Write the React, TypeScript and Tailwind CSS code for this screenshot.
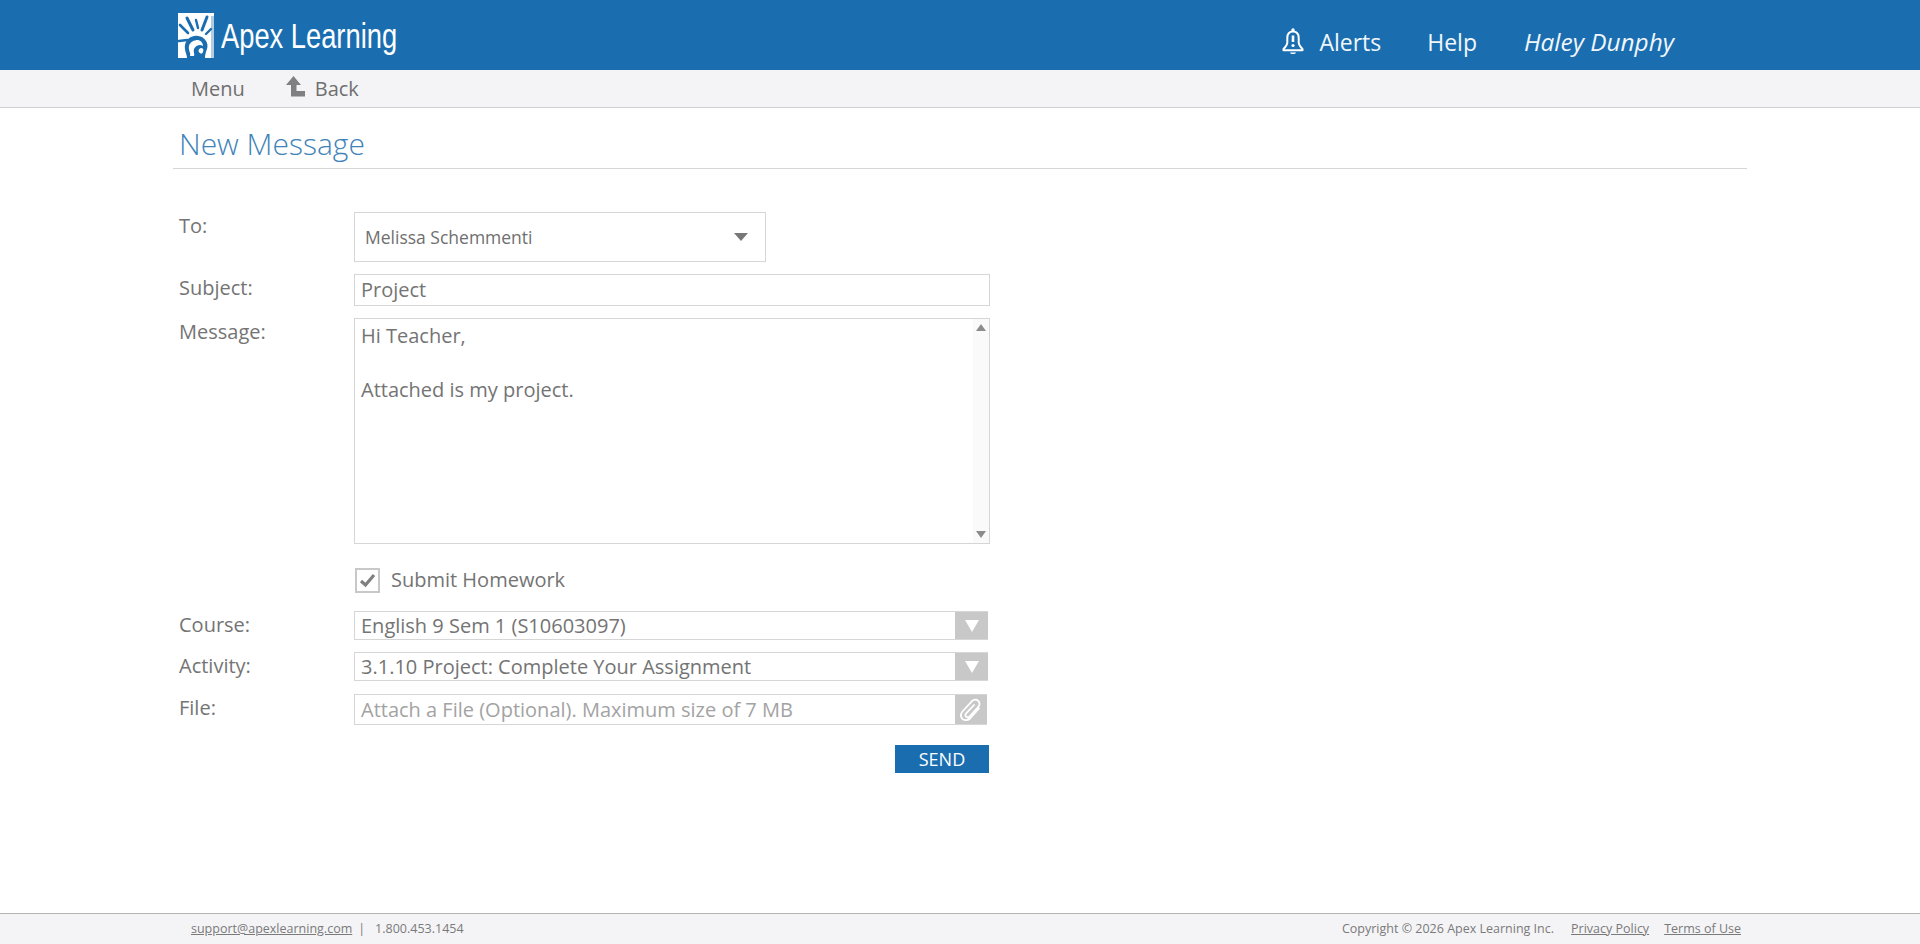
import React from 'react';

const LogoMark = () => (
  <svg width="36" height="45" viewBox="0 0 36 45" className="block shrink-0">
    <path fill="#fff" d="M0 0H36V45H0Z" />
    <path fill="#1a6eb0" d="M33 3H36V45H33Z" opacity="0.35" />
    <g stroke="#1a6eb0" strokeLinecap="round" fill="none">
      <path strokeWidth="3" d="M9 5L15 17" />
      <path strokeWidth="2.4" d="M18 7L20 15" />
      <path strokeWidth="3" d="M29 4L24 17" />
      <path strokeWidth="2.6" d="M2 12L10 20" />
      <path strokeWidth="2.4" d="M33 16L28 21" />
      <path strokeWidth="2.6" d="M1 28L9 27" />
    </g>
    <path fill="#1a6eb0" d="M9 45C9 41 6 37 7 32C8 26 14 22 20 23C27 24 31 30 29 36C28 39 27 41 27 45Z" />
    <path fill="#fff" d="M12 43C13 40 10 37 11 33C12 29 16 27 20 27C24 28 25 31 25 33C22 31 18 32 16 36C15 39 17 41 16 43Z" />
    <path fill="#fff" d="M22 40C20 39 20 36 23 35C25 35 26 37 25 39C24 41 23 41 22 40Z" />
  </svg>
);

const BellIcon = () => (
  <svg width="24" height="29" viewBox="0 0 24 28" fill="none" className="block">
    <path
      d="M12 4C7.8 4 6.3 7 6.3 10.5V15C6.3 17.5 4.5 19.5 2.5 21.5V22.8H21.5V21.5C19.5 19.5 17.7 17.5 17.7 15V10.5C17.7 7 16.2 4 12 4Z"
      stroke="#fff"
      strokeWidth="2"
      strokeLinejoin="round"
    />
    <circle cx="12" cy="2.5" r="1.7" fill="#fff" />
    <path d="M12 8V14.5" stroke="#fff" strokeWidth="2.6" />
    <circle cx="12" cy="18" r="1.6" fill="#fff" />
    <path d="M9 25H15C14.5 27 9.5 27 9 25Z" fill="#fff" />
  </svg>
);

const BackIcon = () => (
  <svg width="20" height="21" viewBox="0 0 20 21" className="block">
    <path fill="#808080" d="M7.5 0L15 9H10.5V15H19V20.5H5V9H0Z" />
  </svg>
);

const CaretButton = () => (
  <div className="flex h-full w-[33px] items-center justify-center bg-[#c8c8c8]">
    <svg width="16" height="14" viewBox="0 0 16 14" className="block">
      <path fill="#fff" d="M1 1H15L8 13Z" />
    </svg>
  </div>
);

const Label = ({ children, className }: { children: React.ReactNode; className?: string }) => (
  <div className={`w-[181px] shrink-0 pl-[6px] text-[20px] leading-[24px] text-[#747474] ${className ?? ''}`}>
    {children}
  </div>
);

const App: React.FC = () => {
  return (
    <div className="flex h-[944px] flex-col overflow-hidden bg-white font-['Open_Sans',sans-serif] text-[#747474]">
      <header className="h-[70px] shrink-0 bg-[#1a6eb0]">
        <div className="flex h-full items-center pl-[178px] pr-[246px]">
          <div className="flex items-center gap-[7px]">
            <LogoMark />
            <span className="w-[176px] origin-left scale-x-[0.78] whitespace-nowrap font-['Liberation_Sans',sans-serif] text-[35px] leading-none text-white">
              Apex Learning
            </span>
          </div>
          <nav className="ml-auto flex items-center pt-[14px] text-[23px] text-[#f1f6fb]">
            <span className="mr-[14px]">
              <BellIcon />
            </span>
            <span className="mr-[46px]">Alerts</span>
            <span className="mr-[47px]">Help</span>
            <span className="text-[24.4px] italic">Haley Dunphy</span>
          </nav>
        </div>
      </header>

      <div className="flex h-[38px] shrink-0 items-center border-b border-[#d0d0d0] bg-[#f4f4f6] pl-[191px] text-[20px] text-[#6f6f6f]">
        <span>Menu</span>
        <span className="ml-[41px] mr-[9px] pb-[4px]">
          <BackIcon />
        </span>
        <span>Back</span>
      </div>

      <main className="flex-1 px-[173px]">
        <h1 className="h-[61px] border-b border-[#d6d6d6] pl-[6px] pt-[15px] text-[30px] font-light leading-[41px] text-[#3f83b9]">
          New Message
        </h1>

        <form className="pt-[43px]">
          <div className="flex">
            <Label className="pt-[2px]">To:</Label>
            <div className="flex h-[50px] w-[412px] items-center justify-between border border-[#d6d6d6] pl-[10px] pr-[17px] text-[17.5px] text-[#6f6f6f]">
              <span>Melissa Schemmenti</span>
              <svg width="14" height="8" viewBox="0 0 14 8" className="block">
                <path fill="#777" d="M0 0H14L7 8Z" />
              </svg>
            </div>
          </div>

          <div className="mt-[12px] flex">
            <Label className="pt-[2px]">Subject:</Label>
            <div className="flex h-[32px] w-[636px] items-center border border-[#d6d6d6] pl-[6px] text-[20px]">
              Project
            </div>
          </div>

          <div className="mt-[12px] flex">
            <Label className="pt-[2px]">Message:</Label>
            <div className="flex h-[226px] w-[636px] border border-[#d6d6d6]">
              <div className="flex-1 pl-[6px] pt-[3px] text-[20px] leading-[27px]">
                <p>Hi Teacher,</p>
                <p className="mt-[27px]">Attached is my project.</p>
              </div>
              <div className="flex w-[16px] flex-col items-center justify-between bg-[#fafafa] py-[5px]">
                <svg width="10" height="7" viewBox="0 0 10 7" className="block">
                  <path fill="#8c8c8c" d="M5 0L10 7H0Z" />
                </svg>
                <svg width="10" height="7" viewBox="0 0 10 7" className="block">
                  <path fill="#8c8c8c" d="M0 0H10L5 7Z" />
                </svg>
              </div>
            </div>
          </div>

          <div className="mt-[24px] flex items-center pl-[182px]">
            <div className="flex h-[25px] w-[25px] items-center justify-center border-2 border-[#c8c8c8]">
              <svg width="17" height="15" viewBox="0 0 17 15" className="block">
                <path fill="none" stroke="#808080" strokeWidth="3.2" d="M2 8L6.5 12L15 2" />
              </svg>
            </div>
            <span className="ml-[11px] pb-[2px] text-[20px] leading-[23px]">Submit Homework</span>
          </div>

          <div className="mt-[18px] flex">
            <Label className="pt-[2px]">Course:</Label>
            <div className="flex h-[29px] w-[634px] items-center justify-between border border-r-0 border-[#d6d6d6] pl-[6px] text-[20px]">
              <span>English 9 Sem 1 (S10603097)</span>
              <CaretButton />
            </div>
          </div>

          <div className="mt-[12px] flex">
            <Label className="pt-[2px]">Activity:</Label>
            <div className="flex h-[29px] w-[634px] items-center justify-between border border-r-0 border-[#d6d6d6] pl-[6px] text-[20px]">
              <span>3.1.10 Project: Complete Your Assignment</span>
              <CaretButton />
            </div>
          </div>

          <div className="mt-[13px] flex">
            <Label className="pt-[2px]">File:</Label>
            <div className="flex h-[31px] w-[633px] items-center justify-between border border-r-0 border-[#d6d6d6] pl-[6px] text-[20px] text-[#a3a3a3]">
              <span>Attach a File (Optional). Maximum size of 7 MB</span>
              <div className="flex h-full w-[32px] items-center justify-center bg-[#c8c8c8]">
                <svg width="24" height="26" viewBox="0 0 24 24" fill="none" stroke="#fff" strokeWidth="1.8" strokeLinecap="round" className="block">
                  <path d="M20 10.5L11 20.5C8.5 23 4.5 22.5 3 20.5C1.5 18.5 1.8 15.5 3.5 13.5L13 3.2C14.8 1.3 17.5 1.3 19.2 2.8C20.9 4.4 21 7 19.3 8.8L10.5 18.5C9.5 19.5 8 19.6 7.1 18.7C6.2 17.8 6.3 16.4 7.2 15.4L15 7" />
                </svg>
              </div>
            </div>
          </div>

          <div className="mt-[20px] flex w-[816px] justify-end">
            <button type="button" className="h-[28px] w-[94px] bg-[#1a6eb0] text-[18px] text-white">
              SEND
            </button>
          </div>
        </form>
      </main>

      <footer className="flex h-[31px] shrink-0 items-center justify-between border-t border-[#b4b4b4] bg-[#f4f4f6] pl-[191px] pr-[179px] text-[12.5px] text-[#7a7a7a]">
        <div>
          <span className="underline">support@apexlearning.com</span>
          <span className="ml-[6px]">|</span>
          <span className="ml-[10px]">1.800.453.1454</span>
        </div>
        <div className="flex">
          <span>Copyright © 2026 Apex Learning Inc.</span>
          <span className="ml-[17px] underline">Privacy Policy</span>
          <span className="ml-[15px] underline">Terms of Use</span>
        </div>
      </footer>
    </div>
  );
};

export default App;
